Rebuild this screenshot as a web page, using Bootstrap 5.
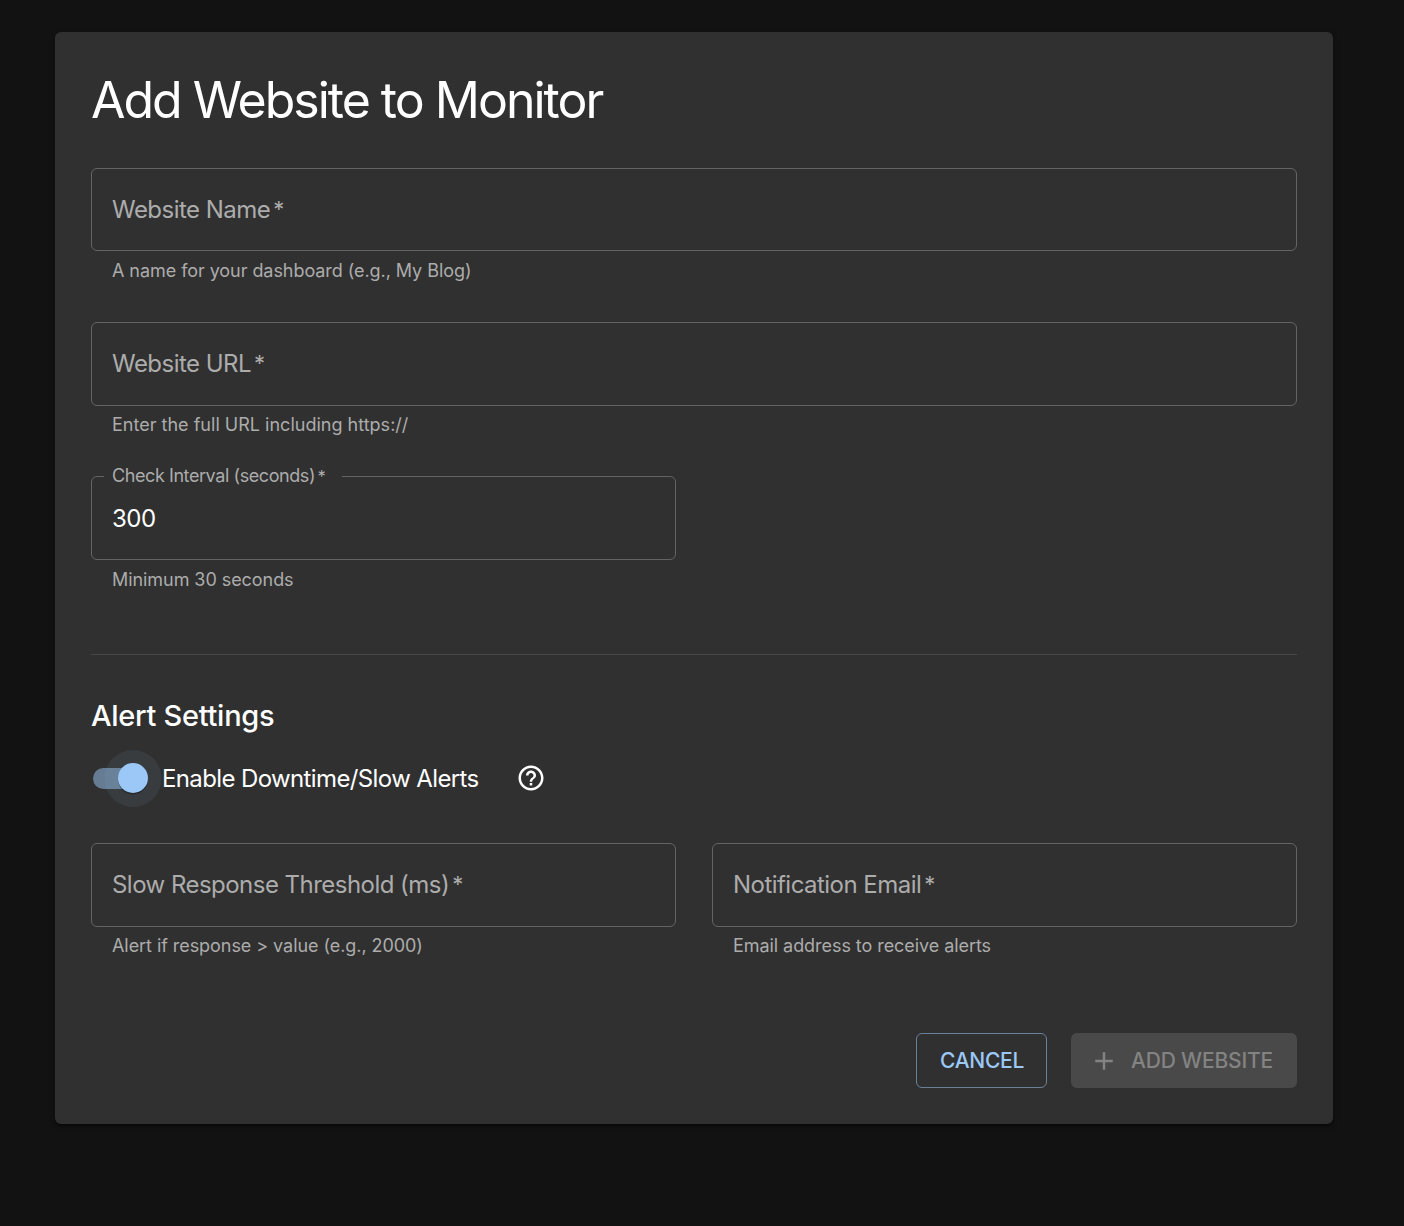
<!DOCTYPE html>
<html lang="en" data-bs-theme="dark">
<head>
<meta charset="utf-8">
<meta name="viewport" content="width=device-width, initial-scale=1">
<title>Add Website to Monitor</title>
<link href="https://cdn.jsdelivr.net/npm/bootstrap@5.3.0/dist/css/bootstrap.min.css" rel="stylesheet">
<style>
  body { background: #121212; color: #fff; font-family: Inter, "Liberation Sans", sans-serif; min-height: 1226px; padding: 32px 71px 0 55px; }
  .monitor-card { background: #303030; border: 0; border-radius: 6px; padding: 36px; height: 1092px;
    box-shadow: 0 3px 2px -2px rgba(0,0,0,.3), 0 2px 2px rgba(0,0,0,.2), 0 2px 6px rgba(0,0,0,.2); }
  .page-title { font-size: 50px; font-weight: 400; line-height: 65px; letter-spacing: -2px; height: 100px; }
  .field-block { height: 154.2px; }
  .outlined { height: 83.4px; background: transparent; border: 1px solid #646464; border-radius: 6px; padding: 0 20px; position: relative; }
  .pair .outlined { height: 84px; }
  .pair .helper { padding-top: 4.2px; }
  .outlined label { font-size: 24px; letter-spacing: -.53px; color: #acacac; white-space: nowrap; line-height: 34px; }
  .outlined input { background: transparent; border: 0; outline: 0; color: #fff; font-size: 24px; letter-spacing: -.5px; min-width: 0; padding: 2px 0 0; }
  .outlined .notch-label { position: absolute; top: -15px; left: 12px; padding: 0 16px 0 8px; width: 238px; background: #303030; font-size: 18px; line-height: 28px; letter-spacing: -.42px; }
  .star { font-size: .92em; line-height: 1; margin-left: .14em; vertical-align: .05em; }
  .helper { font-size: 18px; line-height: 30px; letter-spacing: -.06px; color: #acacac; padding: 4.8px 21px 0; white-space: nowrap; }
  .url-helper { letter-spacing: .01px; }
  .rule { height: 1px; background: #484848; margin-top: 23.4px; }
  .section-title { font-size: 29px; font-weight: 500; line-height: 48px; letter-spacing: -.28px; margin: 37px 0 0; }
  .switch-row { height: 58px; margin-top: 10px; }
  .toggle { width: 71px; height: 57px; flex: none; margin-bottom: 1px; }
  .toggle-label { font-size: 24px; line-height: 36px; letter-spacing: -.62px; }
  .help-icon { margin: 0 0 2px 37px; width: 30px; height: 30px; }
  .pair { --bs-gutter-x: 36px; margin-top: 35px; }
  .actions { gap: 24px; margin-top: auto; }
  .actions .btn { height: 55px; border-radius: 6px; font-size: 21px; font-weight: 500; line-height: 36px; padding: 0 0 0 23px; white-space: nowrap; opacity: 1; text-align: left; letter-spacing: -.25px; }
  .btn-cancel { width: 131px; color: #9bc8f6; border: 1px solid #6a8199; }
  .btn-add { width: 226px; background: #494949; border: 0; color: #838383; }
  .actions .btn-add { padding-left: 18px; letter-spacing: -.17px; }
  .btn-add:disabled { background: #494949; color: #838383; }
  .plus-icon { margin-right: 12px; }
</style>
</head>
<body>
<main class="card monitor-card d-flex flex-column">
  <h1 class="page-title m-0"><span>Add Website to Monitor</span></h1>
  <div class="field-block">
    <div class="outlined d-flex align-items-center">
      <label for="name">Website Name<span class="star">*</span></label><input id="name" class="flex-grow-1">
    </div>
    <div class="helper">A name for your dashboard (e.g., My Blog)</div>
  </div>
  <div class="field-block">
    <div class="outlined d-flex align-items-center">
      <label for="url">Website URL<span class="star">*</span></label><input id="url" class="flex-grow-1">
    </div>
    <div class="helper url-helper">Enter the full URL including https://</div>
  </div>
  <div class="row" style="--bs-gutter-x:36px">
    <div class="col-6 field-block">
      <div class="outlined d-flex align-items-center">
        <label for="interval" class="notch-label">Check Interval (seconds)<span class="star">*</span></label>
        <input id="interval" class="flex-grow-1" value="300">
      </div>
      <div class="helper">Minimum 30 seconds</div>
    </div>
  </div>
  <div class="rule"></div>
  <h2 class="section-title">Alert Settings</h2>
  <div class="switch-row d-flex align-items-center">
    <svg class="toggle" viewBox="0 0 71 57" role="switch" aria-checked="true">
      <rect x="2" y="18" width="51" height="21" rx="10.5" fill="#667c92"/>
      <circle cx="42" cy="28.5" r="28.5" fill="#9bc8f6" fill-opacity=".08"/>
      <circle cx="42" cy="29.5" r="15" fill="#000" fill-opacity=".3"/>
      <circle cx="42" cy="28" r="15" fill="#9bc8f6"/>
    </svg>
    <span class="toggle-label">Enable Downtime/Slow Alerts</span>
    <svg class="help-icon" viewBox="0 0 24 24" fill="#fff"><path d="M11 18h2v-2h-2v2zm1-16C6.480 2 2 6.480 2 12s4.480 10 10 10 10-4.480 10-10S17.520 2 12 2zm0 18c-4.410 0-8-3.590-8-8s3.590-8 8-8 8 3.590 8 8-3.590 8-8 8zm0-14c-2.210 0-4 1.790-4 4h2c0-1.100.9-2 2-2s2 .9 2 2c0 2-3 1.750-3 5h2c0-2.250 3-2.500 3-5 0-2.210-1.790-4-4-4z"/></svg>
  </div>
  <div class="row pair">
    <div class="col-6">
      <div class="outlined d-flex align-items-center">
        <label for="slow">Slow Response Threshold (ms)<span class="star">*</span></label><input id="slow" class="flex-grow-1">
      </div>
      <div class="helper">Alert if response &gt; value (e.g., 2000)</div>
    </div>
    <div class="col-6">
      <div class="outlined d-flex align-items-center">
        <label for="email">Notification Email<span class="star">*</span></label><input id="email" class="flex-grow-1">
      </div>
      <div class="helper">Email address to receive alerts</div>
    </div>
  </div>
  <div class="actions d-flex justify-content-end">
    <button class="btn btn-cancel" type="button">CANCEL</button>
    <button class="btn btn-add d-flex align-items-center" type="button" disabled>
      <svg width="30" height="30" viewBox="0 0 24 24" fill="currentColor" class="plus-icon flex-shrink-0"><path d="M19 13h-6v6h-2v-6H5v-2h6V5h2v6h6v2z"/></svg>
      <span>ADD WEBSITE</span>
    </button>
  </div>
</main>
<script src="https://cdn.jsdelivr.net/npm/bootstrap@5.3.0/dist/js/bootstrap.bundle.min.js"></script>
</body>
</html>
